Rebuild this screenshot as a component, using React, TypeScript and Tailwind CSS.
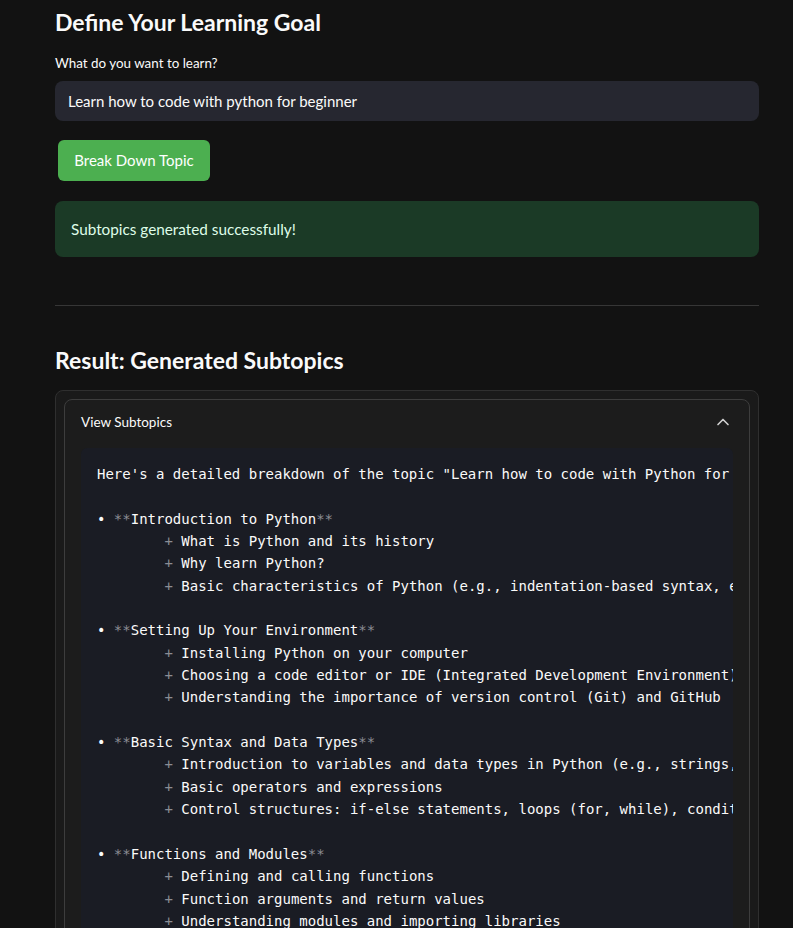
import { ChevronUp } from "lucide-react";

type Section = { title: string; items: string[] };

const intro =
  'Here\'s a detailed breakdown of the topic "Learn how to code with Python for beginners":';

const sections: Section[] = [
  {
    title: "Introduction to Python",
    items: [
      "What is Python and its history",
      "Why learn Python?",
      "Basic characteristics of Python (e.g., indentation-based syntax, easy-to-read code)",
    ],
  },
  {
    title: "Setting Up Your Environment",
    items: [
      "Installing Python on your computer",
      "Choosing a code editor or IDE (Integrated Development Environment)",
      "Understanding the importance of version control (Git) and GitHub",
    ],
  },
  {
    title: "Basic Syntax and Data Types",
    items: [
      "Introduction to variables and data types in Python (e.g., strings, integers, floats)",
      "Basic operators and expressions",
      "Control structures: if-else statements, loops (for, while), conditional statements",
    ],
  },
  {
    title: "Functions and Modules",
    items: [
      "Defining and calling functions",
      "Function arguments and return values",
      "Understanding modules and importing libraries",
    ],
  },
];

// long lines are clipped on the right, like the scrolled code box
function CodeBlock() {
  return (
    <pre className="overflow-hidden rounded-md bg-[#1a1c24] px-4 pt-[15px] pb-6 font-['DejaVu_Sans_Mono',monospace] text-[14px] leading-[22.35px] text-[#fafafa] whitespace-pre">
      {intro}
      {"\n\n"}
      {sections.map((s) => (
        <span key={s.title}>
          {"• "}
          <span className="text-[#8b8d94]">**</span>
          {s.title}
          <span className="text-[#8b8d94]">**</span>
          {"\n"}
          {s.items.map((it) => (
            <span key={it}>
              {"        "}
              <span className="text-[#8b8d94]">+</span>
              {" " + it + "\n"}
            </span>
          ))}
          {"\n"}
        </span>
      ))}
    </pre>
  );
}

export default function App() {
  return (
    <div className="min-h-screen bg-[#121212] font-['Lato','Noto_Sans',sans-serif] text-[#fafafa]">
      <div className="ml-[55px] w-[704px]">
        <h2 className="pt-[6px] text-[23px] font-bold leading-[32px]">Define Your Learning Goal</h2>

        <div className="mt-[15px] text-[13.4px] leading-[20px]">What do you want to learn?</div>
        <div className="mt-[8px] flex h-[40px] items-center rounded-lg bg-[#262730] px-[13px] text-[15px]">
          Learn how to code with python for beginner
        </div>

        <button
          type="button"
          className="ml-[3px] mt-[19px] flex h-[41px] w-[152px] items-center justify-center rounded-md bg-[#4caf50] text-[15px] text-white"
        >
          Break Down Topic
        </button>

        <div className="mt-[20px] flex h-[56px] items-center rounded-lg bg-[#1b3a26] px-4 text-[15.3px] text-[#dffde9]">
          Subtopics generated successfully!
        </div>

        <div className="mt-[48px] h-px bg-[#363636]" />

        <h2 className="mt-[38px] text-[23px] font-bold leading-[32px]">Result: Generated Subtopics</h2>

        {/* bordered container with the expander inside */}
        <div className="mt-[14px] rounded-lg border border-[#2f2f2f] bg-[#1a1a1a] p-2">
          <div className="rounded-lg border border-[#3d3d3d] bg-[#1c1c1c]">
            <div className="flex h-[44px] items-center justify-between px-4">
              <span className="text-[13.5px] leading-[20px]">View Subtopics</span>
              <ChevronUp size={20} strokeWidth={2} className="text-[#d0d0d0]" />
            </div>
            <div className="px-4 pb-4 pt-1">
              <CodeBlock />
            </div>
          </div>
        </div>
      </div>
    </div>
  );
}
